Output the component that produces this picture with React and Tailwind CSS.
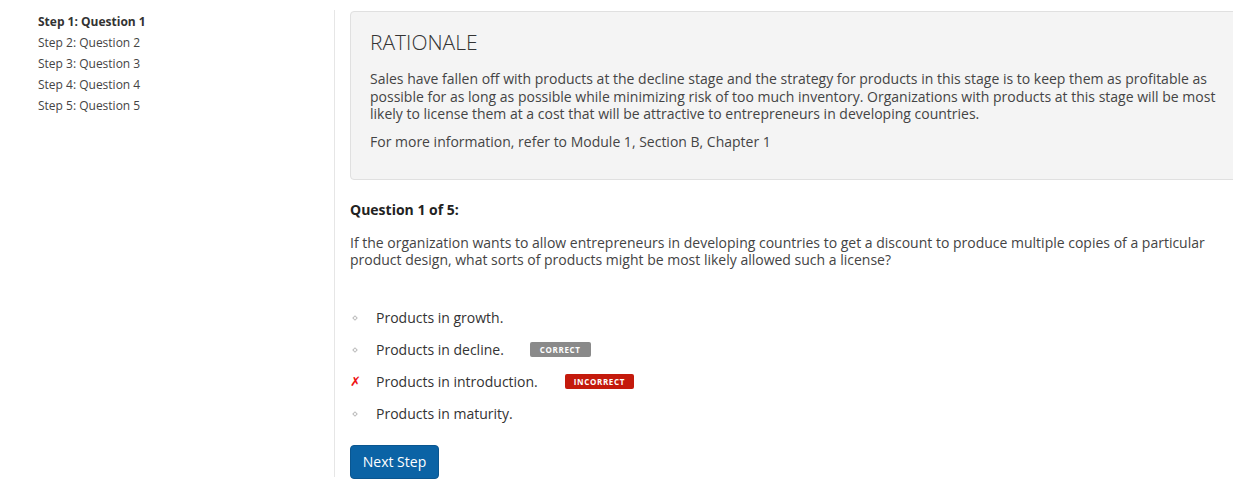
import React from "react";

const font = { fontFamily: '"Open Sans", "Noto Sans", sans-serif' };

function Bullet() {
  return (
    <span className="w-[26px] flex items-center pl-[3px]">
      <span className="block w-[4px] h-[4px] rotate-45 border border-[#bbb]" />
    </span>
  );
}

function Cross() {
  return (
    <span className="w-[26px] flex items-center text-[13px] leading-none text-[#ee1111] font-bold" style={{ fontFamily: '"DejaVu Sans", sans-serif' }}>
      ✗
    </span>
  );
}

function Option({ text, mark, badge }) {
  return (
    <div className="h-[32px] flex items-center text-[14px] text-[#333]">
      {mark === "x" ? <Cross /> : <Bullet />}
      <span>{text}</span>
      {badge === "correct" && (
        <span className="ml-[26px] h-[15px] px-[10px] rounded-[2px] bg-[#8a8a8a] text-white text-[8px] font-bold tracking-[0.08em] flex items-center">
          CORRECT
        </span>
      )}
      {badge === "incorrect" && (
        <span className="ml-[27px] h-[15px] px-[9px] rounded-[2px] bg-[#c41a0c] text-white text-[8px] font-bold tracking-[0.08em] flex items-center">
          INCORRECT
        </span>
      )}
    </div>
  );
}

export default function App() {
  const steps = ["Step 1: Question 1", "Step 2: Question 2", "Step 3: Question 3", "Step 4: Question 4", "Step 5: Question 5"];
  return (
    <div className="w-[1233px] h-[493px] overflow-hidden bg-white flex text-[#333]" style={font}>
      <div className="w-[334px] shrink-0 pl-[38px] pt-[11px]">
        {steps.map((s, i) => (
          <div key={s} className={`h-[21px] leading-[21px] text-[12px] ${i === 0 ? "font-bold text-[#333]" : "text-[#444]"}`}>
            {s}
          </div>
        ))}
      </div>
      <div className="shrink-0 mt-[10px] h-[467px] border-l border-[#e6e6e6] pl-[15px] pt-[1px]">
        <div className="w-[900px] h-[169px] bg-[#f4f4f4] border border-[#e0e0e0] rounded-[4px] px-[19px] pt-[18px]">
          <h2 className="text-[21px] leading-[24px] font-light text-[#333]">RATIONALE</h2>
          <p className="mt-[16px] text-[14px] leading-[17.5px] text-[#444]">
            Sales have fallen off with products at the decline stage and the strategy for products in this stage is to keep them as profitable as possible for as long as possible while minimizing risk of too much inventory. Organizations with products at this stage will be most likely to license them at a cost that will be attractive to entrepreneurs in developing countries.
          </p>
          <p className="mt-[10.5px] text-[14px] leading-[17.5px] text-[#444]">
            For more information, refer to Module 1, Section B, Chapter 1
          </p>
        </div>
        <div className="w-[900px]">
          <h3 className="mt-[21px] text-[14px] leading-[17.5px] font-bold text-[#222]">Question 1 of 5:</h3>
          <p className="mt-[15px] text-[14px] leading-[17.5px] text-[#444]">
            If the organization wants to allow entrepreneurs in developing countries to get a discount to produce multiple copies of a particular product design, what sorts of products might be most likely allowed such a license?
          </p>
          <div className="mt-[33px]">
            <Option text="Products in growth." />
            <Option text="Products in decline." badge="correct" />
            <Option text="Products in introduction." mark="x" badge="incorrect" />
            <Option text="Products in maturity." />
          </div>
          <button className="mt-[15px] h-[34px] w-[89px] rounded-[4px] bg-[#0b63a5] border border-[#0a5690] text-white text-[14px] flex items-center justify-center">
            Next Step
          </button>
        </div>
      </div>
    </div>
  );
}
